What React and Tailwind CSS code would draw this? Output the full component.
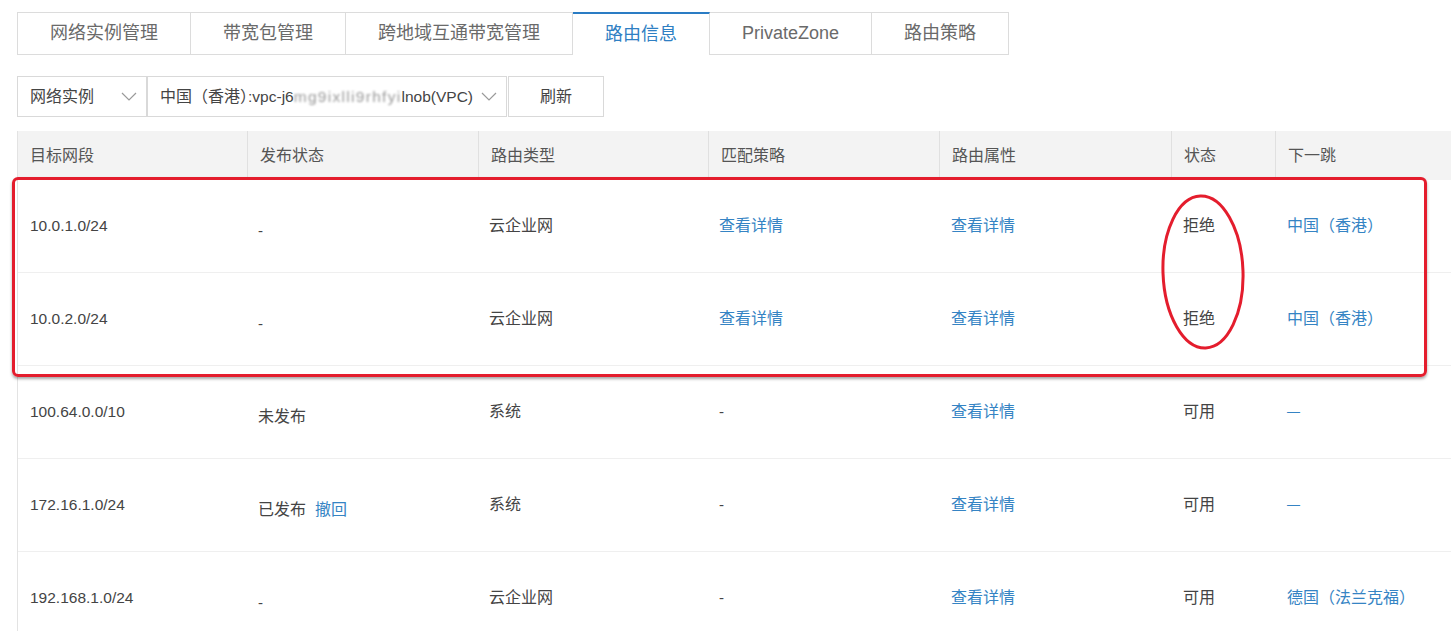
import React from "react";

const FONT = { fontFamily: '"Liberation Sans", "Noto Sans CJK SC", sans-serif' };

function Chevron() {
  return (
    <svg width="16" height="9" viewBox="0 0 16 9" className="shrink-0">
      <polyline points="1,1 8,8 15,1" fill="none" stroke="#9a9a9a" strokeWidth="1.2" />
    </svg>
  );
}

const tabs = [
  { label: "网络实例管理" },
  { label: "带宽包管理" },
  { label: "跨地域互通带宽管理" },
  { label: "路由信息", active: true },
  { label: "PrivateZone" },
  { label: "路由策略" },
];

const Link = ({ children, className = "" }) => (
  <span className={"text-[#3584c4] text-[16px] " + className}>{children}</span>
);

const Place = ({ head, inner }) => (
  <>
    {head}（{inner}
    <span className="[font-feature-settings:'halt']">）</span>
  </>
);

const rows = [
  { ip: "10.0.1.0/24", pub: "-", type: "云企业网", match: "link", status: "拒绝", next: ["中国", "香港"] },
  { ip: "10.0.2.0/24", pub: "-", type: "云企业网", match: "link", status: "拒绝", next: ["中国", "香港"] },
  { ip: "100.64.0.0/10", pub: "未发布", type: "系统", match: "-", status: "可用", next: "dash" },
  { ip: "172.16.1.0/24", pub: "已发布", revoke: true, type: "系统", match: "-", status: "可用", next: "dash" },
  { ip: "192.168.1.0/24", pub: "-", type: "云企业网", match: "-", status: "可用", next: ["德国", "法兰克福"] },
];

const cols = "grid grid-cols-[230px_231px_230px_231px_232px_104px_1fr]";

export default function App() {
  return (
    <div className="relative w-[1451px] h-[631px] overflow-hidden bg-white text-[#444]" style={FONT}>
      {/* Tabs */}
      <div className="flex pt-[12px] pl-[17px]">
        {tabs.map((t, i) =>
          t.active ? (
            <div
              key={i}
              className="h-[43px] px-[32px] flex items-center border-t-2 border-t-[#2a7cc4] border-r border-r-[#dcdcdc] bg-white text-[18px] text-[#2f7fc3]"
            >
              {t.label}
            </div>
          ) : (
            <div
              key={i}
              className={
                "h-[43px] px-[32px] flex items-center border border-[#dcdcdc] text-[18px] text-[#6a6a6a] " +
                (i === 0 ? "" : "border-l-0")
              }
            >
              {t.label}
            </div>
          )
        )}
      </div>

      {/* Toolbar */}
      <div className="flex mt-[21px] ml-[17px] h-[41px]">
        <div className="w-[130px] border border-[#d9d9d9] pl-[12px] pr-[9px] flex items-center justify-between text-[16px] text-[#444]">
          <span>网络实例</span>
          <Chevron />
        </div>
        <div className="w-[360px] border border-[#d9d9d9] pl-[12px] pr-[9px] flex items-center justify-between text-[#444]">
          <span className="whitespace-nowrap flex items-center">
            <span className="text-[16px]">
              <Place head="中国" inner="香港" />
            </span>
            <span className="text-[15.5px]">:vpc-j6</span>
            <span className="text-[15.5px] whitespace-nowrap blur-[1.2px] text-[#9a9a9a] tracking-[1.3px]">
              mg9ixlli9rhfyi
            </span>
            <span className="text-[15.5px]">lnob(VPC)</span>
          </span>
          <Chevron />
        </div>
        <div className="w-[96px] ml-[1px] border border-[#d9d9d9] flex items-center justify-center text-[16px] text-[#444]">
          刷新
        </div>
      </div>

      {/* Table */}
      <div className="mt-[14px] ml-[17px] w-[1460px] border-l border-[#e3e3e3]">
        <div className={cols + " h-[49px] bg-[#f3f3f3] text-[16px] text-[#555]"}>
          {["目标网段", "发布状态", "路由类型", "匹配策略", "路由属性", "状态", "下一跳"].map((h, i) => (
            <div key={i} className="flex items-center px-[12px] border-r border-[#e0e0e0]">
              {h}
            </div>
          ))}
        </div>
        {rows.map((r, i) => (
          <div key={i} className={cols + " h-[93px] border-b border-[#efefef]"}>
            <div className="flex items-center px-[12px] text-[15.5px] text-[#444]">{r.ip}</div>
            <div className="flex items-center px-[10px] pt-[10px]">
              {r.pub === "-" ? (
                <span className="text-[15px] text-[#444]">-</span>
              ) : (
                <span className="text-[16px] text-[#444]">
                  {r.pub}
                  {r.revoke && <Link className="ml-[9px]">撤回</Link>}
                </span>
              )}
            </div>
            <div className="flex items-center px-[10px] text-[16px] text-[#444]">{r.type}</div>
            <div className="flex items-center px-[10px]">
              {r.match === "link" ? <Link>查看详情</Link> : <span className="text-[15px] text-[#444]">-</span>}
            </div>
            <div className="flex items-center px-[11px]">
              <Link>查看详情</Link>
            </div>
            <div className="flex items-center px-[11px] text-[16px] text-[#444]">{r.status}</div>
            <div className="flex items-center px-[11px]">
              {r.next === "dash" ? (
                <span className="text-[13px] text-[#3584c4]">—</span>
              ) : (
                <Link>
                  <Place head={r.next[0]} inner={r.next[1]} />
                </Link>
              )}
            </div>
          </div>
        ))}
      </div>

      {/* Annotations */}
      <div className="absolute left-[12px] top-[177px] w-[1415px] h-[200px] border-[3px] border-[#e41d2d] rounded-[6px] shadow-[0_2px_3px_rgba(0,0,0,0.35)] pointer-events-none" />
      <svg className="absolute left-[1157px] top-[190px] pointer-events-none" width="92" height="164" viewBox="0 0 92 164">
        <ellipse cx="46" cy="82" rx="40" ry="76" fill="none" stroke="#e41d2d" strokeWidth="3" transform="rotate(-2 46 82)" />
      </svg>
    </div>
  );
}
